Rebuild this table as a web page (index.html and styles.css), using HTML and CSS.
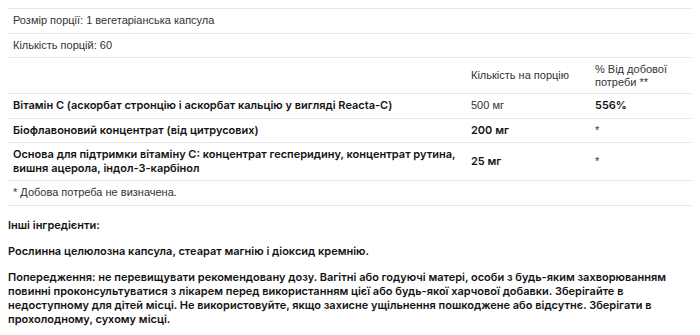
FILE: index.html
```html
<!DOCTYPE html>
<html lang="uk">
<head>
<meta charset="utf-8">
<title>Склад</title>
<link rel="stylesheet" href="styles.css">
</head>
<body>
<table class="facts">
  <colgroup>
    <col class="c-name">
    <col class="c-amount">
    <col class="c-dv">
  </colgroup>
  <tbody>
    <tr><td colspan="3" class="reg">Розмір порції: 1 вегетаріанська капсула</td></tr>
    <tr><td colspan="3" class="reg">Кількість порцій: 60</td></tr>
    <tr class="head">
      <td></td>
      <td class="reg">Кількість на порцію</td>
      <td class="reg">% Від добової потреби **</td>
    </tr>
    <tr>
      <td class="b">Вітамін С (аскорбат стронцію і аскорбат кальцію у вигляді Reacta-C)</td>
      <td class="reg">500 мг</td>
      <td class="b">556%</td>
    </tr>
    <tr>
      <td class="b">Біофлавоновий концентрат (від цитрусових)</td>
      <td class="b">200 мг</td>
      <td class="reg">*</td>
    </tr>
    <tr>
      <td class="b">Основа для підтримки вітаміну С: концентрат гесперидину, концентрат рутина, вишня ацерола, індол-3-карбінол</td>
      <td class="b">25 мг</td>
      <td class="reg">*</td>
    </tr>
    <tr><td colspan="3" class="reg">* Добова потреба не визначена.</td></tr>
  </tbody>
</table>
<div class="notes">
  <p>Інші інгредієнти:</p>
  <p>Рослинна целюлозна капсула, стеарат магнію і діоксид кремнію.</p>
  <p>Попередження: не перевищувати рекомендовану дозу. Вагітні або годуючі матері, особи з будь-яким захворюванням повинні проконсультуватися з лікарем перед використанням цієї або будь-якої харчової добавки. Зберігайте в недоступному для дітей місці. Не використовуйте, якщо захисне ущільнення пошкоджене або відсутнє. Зберігати в прохолодному, сухому місці.</p>
</div>
</body>
</html>
```
FILE: styles.css
```css
html, body {
  background: #ffffff;
}
body {
  margin: 8px;
  color: #1f1f1f;
  font-family: "Inter", "Liberation Sans", sans-serif;
}
.facts {
  width: 684px;
  border-collapse: collapse;
  border-top: 1px solid #e6e6e6;
}
.c-name { width: 458px; }
.c-amount { width: 124px; }
.c-dv { width: 102px; }
.facts td {
  padding: 5px 5px;
  border-bottom: 1px solid #e6e6e6;
  vertical-align: middle;
  line-height: 13.5px;
  text-align: left;
}
.facts .head td {
  line-height: 12.5px;
}
.reg {
  font-family: "Liberation Sans", Arial, sans-serif;
  font-size: 11px;
  color: #333333;
}
.b {
  font-family: "Inter", sans-serif;
  font-weight: 600;
  font-size: 11px;
  color: #141414;
}
.notes {
  margin-top: 12px;
}
.notes p {
  margin: 0 0 12px 0;
  font-family: "Inter", sans-serif;
  font-weight: 600;
  font-size: 11px;
  line-height: 14px;
  color: #141414;
}
```
